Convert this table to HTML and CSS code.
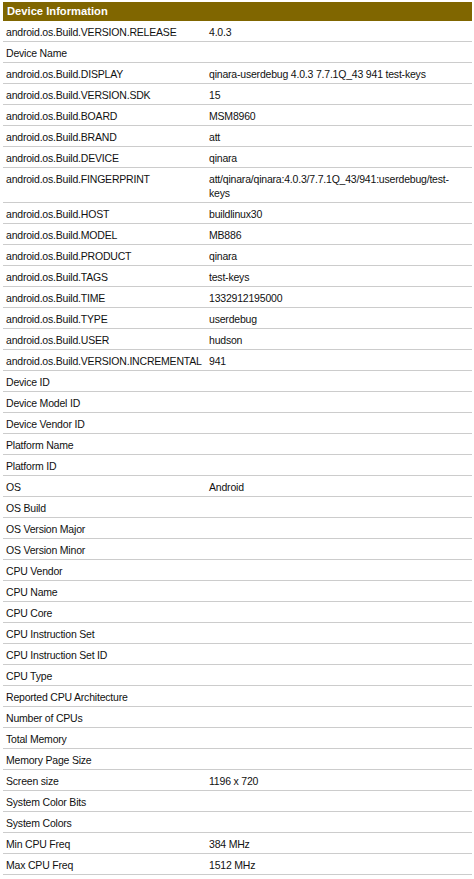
FILE: index.html
```html
<!DOCTYPE html>
<html>
<head>
<meta charset="utf-8">
<link rel="stylesheet" href="styles.css">
</head>
<body>
<table class="info">
  <colgroup><col class="c1"><col class="c2"></colgroup>
  <thead>
    <tr><th colspan="2" class="head">Device Information</th></tr>
  </thead>
  <tbody>
    <tr><td class="k">android.os.Build.VERSION.RELEASE</td><td class="v">4.0.3</td></tr>
    <tr><td class="k">Device Name</td><td class="v"></td></tr>
    <tr><td class="k">android.os.Build.DISPLAY</td><td class="v">qinara-userdebug 4.0.3 7.7.1Q_43 941 test-keys</td></tr>
    <tr><td class="k">android.os.Build.VERSION.SDK</td><td class="v">15</td></tr>
    <tr><td class="k">android.os.Build.BOARD</td><td class="v">MSM8960</td></tr>
    <tr><td class="k">android.os.Build.BRAND</td><td class="v">att</td></tr>
    <tr><td class="k">android.os.Build.DEVICE</td><td class="v">qinara</td></tr>
    <tr><td class="k">android.os.Build.FINGERPRINT</td><td class="v">att/qinara/qinara:4.0.3/7.7.1Q_43/941:userdebug/test-keys</td></tr>
    <tr><td class="k">android.os.Build.HOST</td><td class="v">buildlinux30</td></tr>
    <tr><td class="k">android.os.Build.MODEL</td><td class="v">MB886</td></tr>
    <tr><td class="k">android.os.Build.PRODUCT</td><td class="v">qinara</td></tr>
    <tr><td class="k">android.os.Build.TAGS</td><td class="v">test-keys</td></tr>
    <tr><td class="k">android.os.Build.TIME</td><td class="v">1332912195000</td></tr>
    <tr><td class="k">android.os.Build.TYPE</td><td class="v">userdebug</td></tr>
    <tr><td class="k">android.os.Build.USER</td><td class="v">hudson</td></tr>
    <tr><td class="k">android.os.Build.VERSION.INCREMENTAL</td><td class="v">941</td></tr>
    <tr><td class="k">Device ID</td><td class="v"></td></tr>
    <tr><td class="k">Device Model ID</td><td class="v"></td></tr>
    <tr><td class="k">Device Vendor ID</td><td class="v"></td></tr>
    <tr><td class="k">Platform Name</td><td class="v"></td></tr>
    <tr><td class="k">Platform ID</td><td class="v"></td></tr>
    <tr><td class="k">OS</td><td class="v">Android</td></tr>
    <tr><td class="k">OS Build</td><td class="v"></td></tr>
    <tr><td class="k">OS Version Major</td><td class="v"></td></tr>
    <tr><td class="k">OS Version Minor</td><td class="v"></td></tr>
    <tr><td class="k">CPU Vendor</td><td class="v"></td></tr>
    <tr><td class="k">CPU Name</td><td class="v"></td></tr>
    <tr><td class="k">CPU Core</td><td class="v"></td></tr>
    <tr><td class="k">CPU Instruction Set</td><td class="v"></td></tr>
    <tr><td class="k">CPU Instruction Set ID</td><td class="v"></td></tr>
    <tr><td class="k">CPU Type</td><td class="v"></td></tr>
    <tr><td class="k">Reported CPU Architecture</td><td class="v"></td></tr>
    <tr><td class="k">Number of CPUs</td><td class="v"></td></tr>
    <tr><td class="k">Total Memory</td><td class="v"></td></tr>
    <tr><td class="k">Memory Page Size</td><td class="v"></td></tr>
    <tr><td class="k">Screen size</td><td class="v">1196 x 720</td></tr>
    <tr><td class="k">System Color Bits</td><td class="v"></td></tr>
    <tr><td class="k">System Colors</td><td class="v"></td></tr>
    <tr><td class="k">Min CPU Freq</td><td class="v">384 MHz</td></tr>
    <tr><td class="k">Max CPU Freq</td><td class="v">1512 MHz</td></tr>
  </tbody>
</table>
</body>
</html>
```
FILE: styles.css
```css
html, body {
  background: #ffffff;
}
body {
  margin: 2px 2px 0 3px;
  font-family: "Liberation Sans", Arial, sans-serif;
  font-size: 10.5px;
  letter-spacing: -0.2px;
  color: #111111;
}
.info {
  width: 469px;
  border-collapse: collapse;
  table-layout: fixed;
}
.c1 {
  width: 203px;
}
.head {
  background: #806600;
  color: #ffffff;
  font-weight: bold;
  font-size: 11.2px;
  letter-spacing: 0;
  text-align: left;
  height: 19px;
  padding: 0 4px;
  line-height: 19px;
}
.k, .v {
  vertical-align: top;
  line-height: 14px;
  padding: 4px 3px 2px 3px;
  border-bottom: 1px solid #cccccc;
  height: 14px;
}
```
